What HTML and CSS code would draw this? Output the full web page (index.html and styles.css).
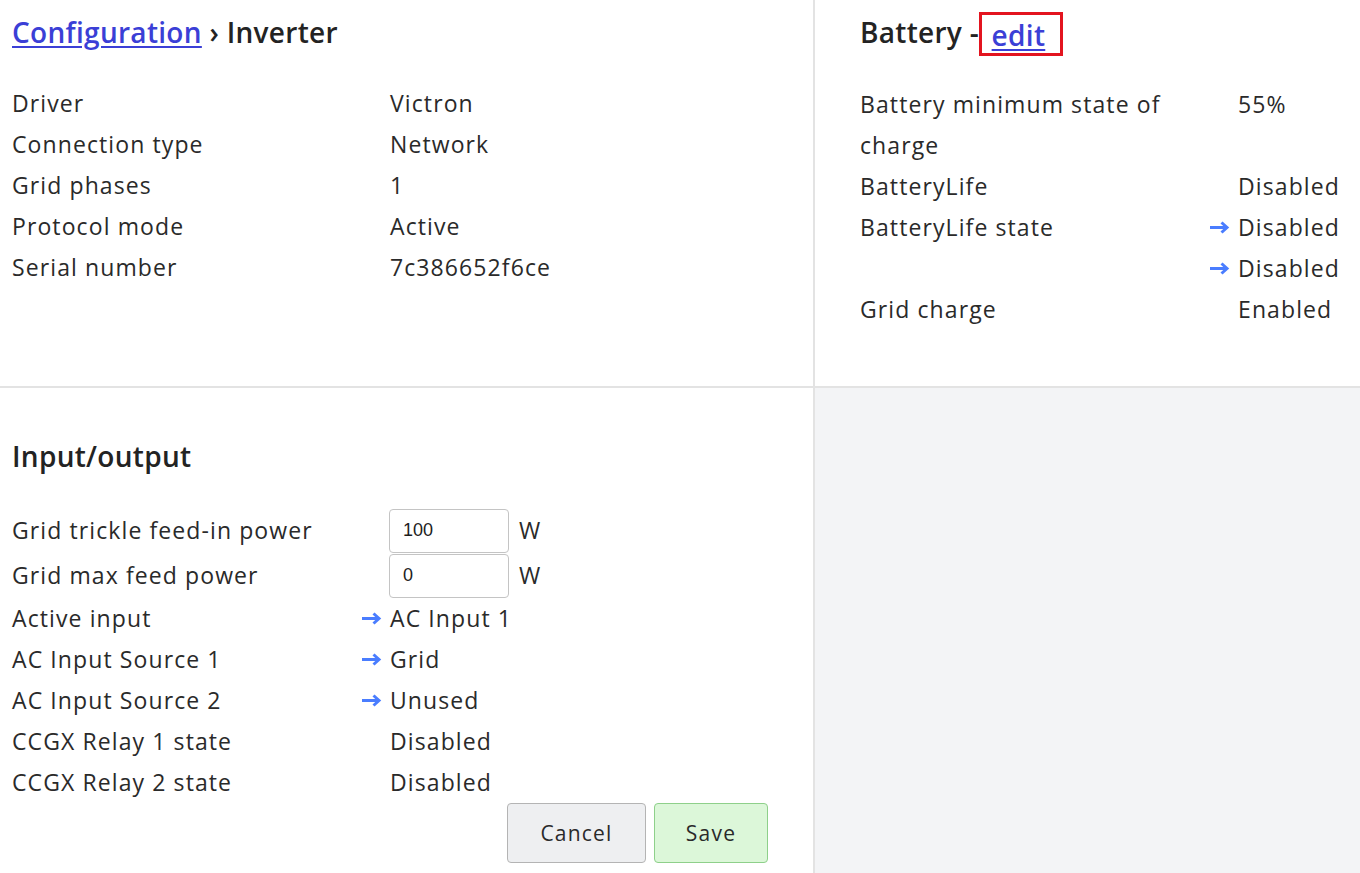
FILE: index.html
```html
<!DOCTYPE html>
<html>
<head>
<meta charset="utf-8">
<link rel="stylesheet" href="styles.css">
</head>
<body>
<div class="page">
  <section class="card card-tl">
    <h1 class="title"><a href="#" class="link">Configuration</a> › Inverter</h1>
    <div class="rows">
      <div class="row"><div class="label">Driver</div><div class="value">Victron</div></div>
      <div class="row"><div class="label">Connection type</div><div class="value">Network</div></div>
      <div class="row"><div class="label">Grid phases</div><div class="value">1</div></div>
      <div class="row"><div class="label">Protocol mode</div><div class="value">Active</div></div>
      <div class="row"><div class="label">Serial number</div><div class="value">7c386652f6ce</div></div>
    </div>
  </section>
  <section class="card card-tr">
    <h1 class="title">Battery - <a href="#" class="link edit">edit</a></h1>
    <div class="rows">
      <div class="row"><div class="label">Battery minimum state of charge</div><div class="value">55%</div></div>
      <div class="row"><div class="label">BatteryLife</div><div class="value">Disabled</div></div>
      <div class="row"><div class="label">BatteryLife state</div><div class="value"><svg class="arrow" viewBox="0 0 20 13" width="20" height="13"><path d="M0 6.5H17M11.5 1.5L17 6.5L11.5 11.5" fill="none" stroke="#4a7dff" stroke-width="3"/></svg>Disabled</div></div>
      <div class="row"><div class="label"></div><div class="value"><svg class="arrow" viewBox="0 0 20 13" width="20" height="13"><path d="M0 6.5H17M11.5 1.5L17 6.5L11.5 11.5" fill="none" stroke="#4a7dff" stroke-width="3"/></svg>Disabled</div></div>
      <div class="row"><div class="label">Grid charge</div><div class="value">Enabled</div></div>
    </div>
  </section>
  <section class="card card-bl">
    <h2 class="title sub">Input/output</h2>
    <div class="rows">
      <div class="row row-input"><div class="label">Grid trickle feed-in power</div><div class="value"><input class="num" type="text" value="100"><span class="unit">W</span></div></div>
      <div class="row row-input"><div class="label">Grid max feed power</div><div class="value"><input class="num" type="text" value="0"><span class="unit">W</span></div></div>
      <div class="row"><div class="label">Active input</div><div class="value"><svg class="arrow" viewBox="0 0 20 13" width="20" height="13"><path d="M0 6.5H17M11.5 1.5L17 6.5L11.5 11.5" fill="none" stroke="#4a7dff" stroke-width="3"/></svg>AC Input 1</div></div>
      <div class="row"><div class="label">AC Input Source 1</div><div class="value"><svg class="arrow" viewBox="0 0 20 13" width="20" height="13"><path d="M0 6.5H17M11.5 1.5L17 6.5L11.5 11.5" fill="none" stroke="#4a7dff" stroke-width="3"/></svg>Grid</div></div>
      <div class="row"><div class="label">AC Input Source 2</div><div class="value"><svg class="arrow" viewBox="0 0 20 13" width="20" height="13"><path d="M0 6.5H17M11.5 1.5L17 6.5L11.5 11.5" fill="none" stroke="#4a7dff" stroke-width="3"/></svg>Unused</div></div>
      <div class="row"><div class="label">CCGX Relay 1 state</div><div class="value">Disabled</div></div>
      <div class="row"><div class="label">CCGX Relay 2 state</div><div class="value">Disabled</div></div>
    </div>
    <div class="actions">
      <button class="btn btn-cancel">Cancel</button>
      <button class="btn btn-save">Save</button>
    </div>
  </section>
  <div class="empty"></div>
</div>
</body>
</html>
```

FILE: styles.css
```css
html, body {
  margin: 0;
  padding: 0;
}
body {
  background: #f3f4f6;
  font-family: "Open Sans", "Noto Sans", sans-serif;
  color: #2a2a2a;
  font-size: 23px;
  letter-spacing: 1.1px;
  overflow: hidden;
}
.page {
  display: grid;
  grid-template-columns: 815px 1fr;
  grid-template-rows: 388px auto;
  min-height: 873px;
}
.card {
  background: #fff;
  box-sizing: border-box;
}
.card-tl {
  border-right: 2px solid #e3e3e3;
  border-bottom: 2px solid #e3e3e3;
  padding: 12px 45px 0 12px;
}
.card-tr {
  border-bottom: 2px solid #e3e3e3;
  padding: 12px 0 0 45px;
}
.card-bl {
  border-right: 2px solid #e3e3e3;
  padding: 48px 45px 10px 12px;
}
.title {
  margin: 0;
  font-size: 28px;
  line-height: 40px;
  font-weight: 600;
  letter-spacing: 0.3px;
  color: #232323;
}
.link {
  color: #3b3fd6;
  text-decoration: underline;
  text-decoration-thickness: 2px;
  text-underline-offset: 3px;
}
.edit {
  outline: 3px solid #e3141f;
  outline-offset: 0;
  padding: 3px 15px 1px 10px;
  margin-left: -5px;
  display: inline-block;
  line-height: 34px;
  vertical-align: -3px;
}
.rows {
  margin-top: 31px;
}
.sub + .rows {
  margin-top: 32px;
}
.row {
  display: flex;
  align-items: flex-start;
  min-height: 41px;
  line-height: 41px;
}
.row-input {
  min-height: 45px;
  align-items: center;
}
.label {
  width: 378px;
  flex: none;
}
.card-tr .label {
  width: 340px;
  margin-right: 38px;
}
.value {
  position: relative;
  display: flex;
  align-items: center;
}
.arrow {
  position: absolute;
  right: 100%;
  top: 14px;
  margin-right: 8px;
}
.num {
  width: 120px;
  height: 44px;
  box-sizing: border-box;
  margin: 0 0 0 -1px;
  padding: 0 13px;
  border: 1px solid #c4c4c4;
  border-radius: 4px;
  font-family: "Liberation Sans", Arial, sans-serif;
  font-size: 18px;
  letter-spacing: 0;
  color: #1d1d1d;
  background: #fff;
}
.unit {
  margin-left: 10px;
}
.actions {
  display: flex;
  justify-content: flex-end;
  gap: 8px;
}
.btn {
  height: 60px;
  box-sizing: border-box;
  border-radius: 4px;
  font-family: "Open Sans", "Noto Sans", sans-serif;
  font-size: 21px;
  letter-spacing: 1.2px;
  color: #2a2a2a;
  cursor: pointer;
}
.btn-cancel {
  width: 139px;
  background: #eeeff1;
  border: 1px solid #b4b4b4;
}
.btn-save {
  width: 114px;
  background: #dcf7d9;
  border: 1px solid #8ed08a;
}
.empty {
  background: #f3f4f6;
}
```
